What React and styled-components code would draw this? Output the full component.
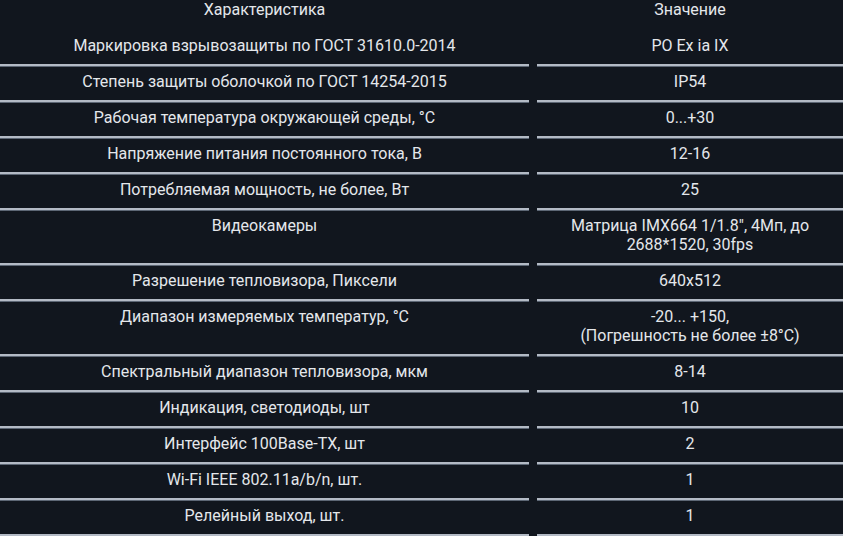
import styled, { createGlobalStyle } from "styled-components";

// DATA ////////////////////////////////////////////////////////////////////////////////////////////////////
const rows = [
  ["Маркировка взрывозащиты по ГОСТ 31610.0-2014", "PO Ex ia IX"],
  ["Степень защиты оболочкой по ГОСТ 14254-2015", "IP54"],
  ["Рабочая температура окружающей среды, °С", "0...+30"],
  ["Напряжение питания постоянного тока, В", "12-16"],
  ["Потребляемая мощность, не более, Вт", "25"],
  ["Видеокамеры", "Матрица IMX664 1/1.8\", 4Мп, до 2688*1520, 30fps"],
  ["Разрешение тепловизора, Пиксели", "640x512"],
  [
    "Диапазон измеряемых температур, °С",
    <>
      -20... +150,
      <br />
      (Погрешность не более ±8°С)
    </>,
  ],
  ["Спектральный диапазон тепловизора, мкм", "8-14"],
  ["Индикация, светодиоды, шт", "10"],
  ["Интерфейс 100Base-TX, шт", "2"],
  ["Wi-Fi IEEE 802.11a/b/n, шт.", "1"],
  ["Релейный выход, шт.", "1"],
];

const App = () => {
  return (
    <>
      <GlobalStyle />
      <Table>
        <HeadCell>Характеристика</HeadCell>
        <HeadCell>Значение</HeadCell>
        {rows.map(([name, value], i) => (
          <Row key={i}>
            <Cell>{name}</Cell>
            <Cell $value>{value}</Cell>
          </Row>
        ))}
      </Table>
    </>
  );
};

export default App;

// STYLED COMPONENTS ////////////////////////////////////////////////////////////////////////////////////////////////////

const GlobalStyle = createGlobalStyle`
  html, body {
    margin: 0;
    padding: 0;
    background-color: #11161e;
  }
  body {
    font-family: Roboto, "Liberation Sans", sans-serif;
  }
`;

const Table = styled.div`
  width: 843px;
  display: grid;
  grid-template-columns: 529px 1fr;
  column-gap: 8px;
  color: #e4e7eb;
  font-size: 16px;
  line-height: 19px;
`;

const Row = styled.div`
  display: contents;
`;

const HeadCell = styled.div`
  text-align: center;
  padding: 0 8px 11px;
`;

const Cell = styled.div`
  text-align: center;
  padding: ${(p) => (p.$value ? "6px 16px 9px" : "6px 8px 9px")};
  border-bottom: 2px solid #b3bac5;
  box-shadow: 0 1px 0 #5d6775;
`;
